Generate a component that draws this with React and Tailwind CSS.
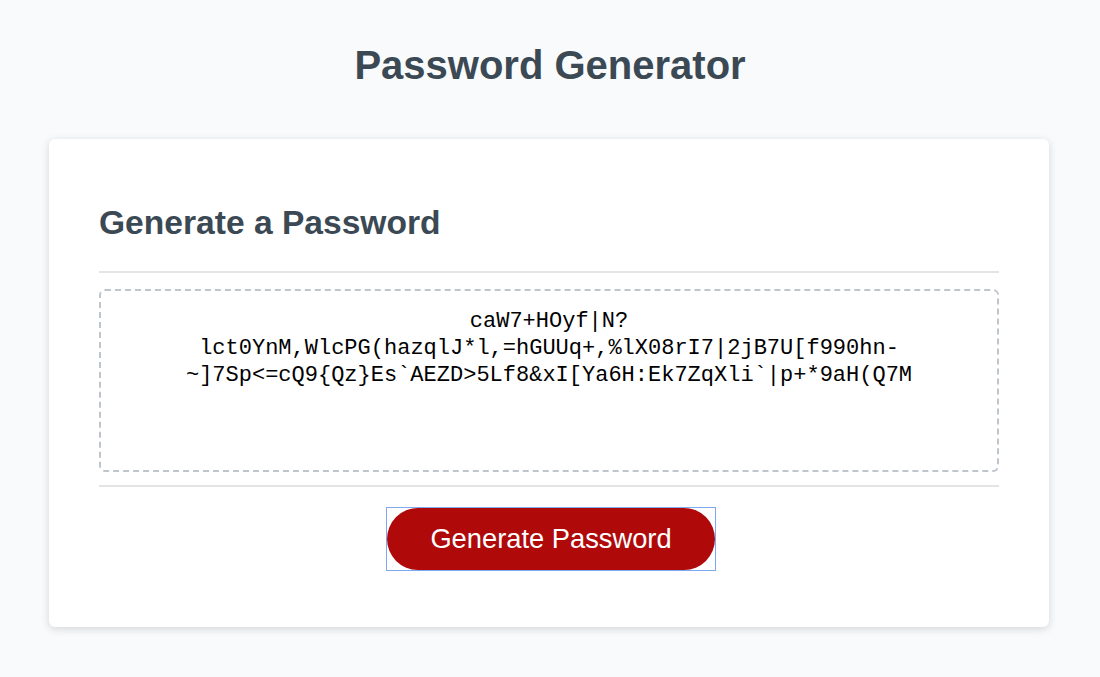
import React from "react";

const passwordLines = [
  "caW7+HOyf|N?",
  "lct0YnM,WlcPG(hazqlJ*l,=hGUUq+,%lX08rI7|2jB7U[f990hn-",
  "~]7Sp<=cQ9{Qz}Es`AEZD>5Lf8&xI[Ya6H:Ek7ZqXli`|p+*9aH(Q7M",
];

const App = () => {
  return (
    <div className="min-h-screen bg-[#f9fafb] pt-[45px] pb-10 font-['Liberation_Sans',Arial,sans-serif] text-[#3b4954]">
      <h1 className="text-center text-[40px] leading-[40px] font-bold">Password Generator</h1>
      <div className="mx-auto mt-[54px] w-[1000px] -translate-x-px rounded-[6px] bg-white px-[50px] pt-[67px] pb-[56px] shadow-[0_2px_8px_rgba(0,0,0,0.15)]">
        <h2 className="text-[33.6px] leading-[34px] font-bold">Generate a Password</h2>
        <div className="mt-[31px] h-[2px] bg-[#e4e4e4]" />
        <div className="mt-[16px] h-[183px] rounded-[6px] border-2 border-dashed border-[#bfc5cc] px-[15px] pt-[17px] text-center font-['Liberation_Mono','DejaVu_Sans_Mono',monospace] text-[22px] leading-[27px] text-black">
          {passwordLines.map((line) => (
            <div key={line}>{line}</div>
          ))}
        </div>
        <div className="mt-[13px] h-[2px] bg-[#e4e4e4]" />
        <div className="mt-[20px] flex justify-center pl-[4px]">
          <span className="border border-[#7ea8f0]">
            <button
              type="button"
              className="block h-[62px] w-[328px] rounded-full bg-[#b0090a] text-[27.3px] text-white"
            >
              Generate Password
            </button>
          </span>
        </div>
      </div>
    </div>
  );
};

export default App;
